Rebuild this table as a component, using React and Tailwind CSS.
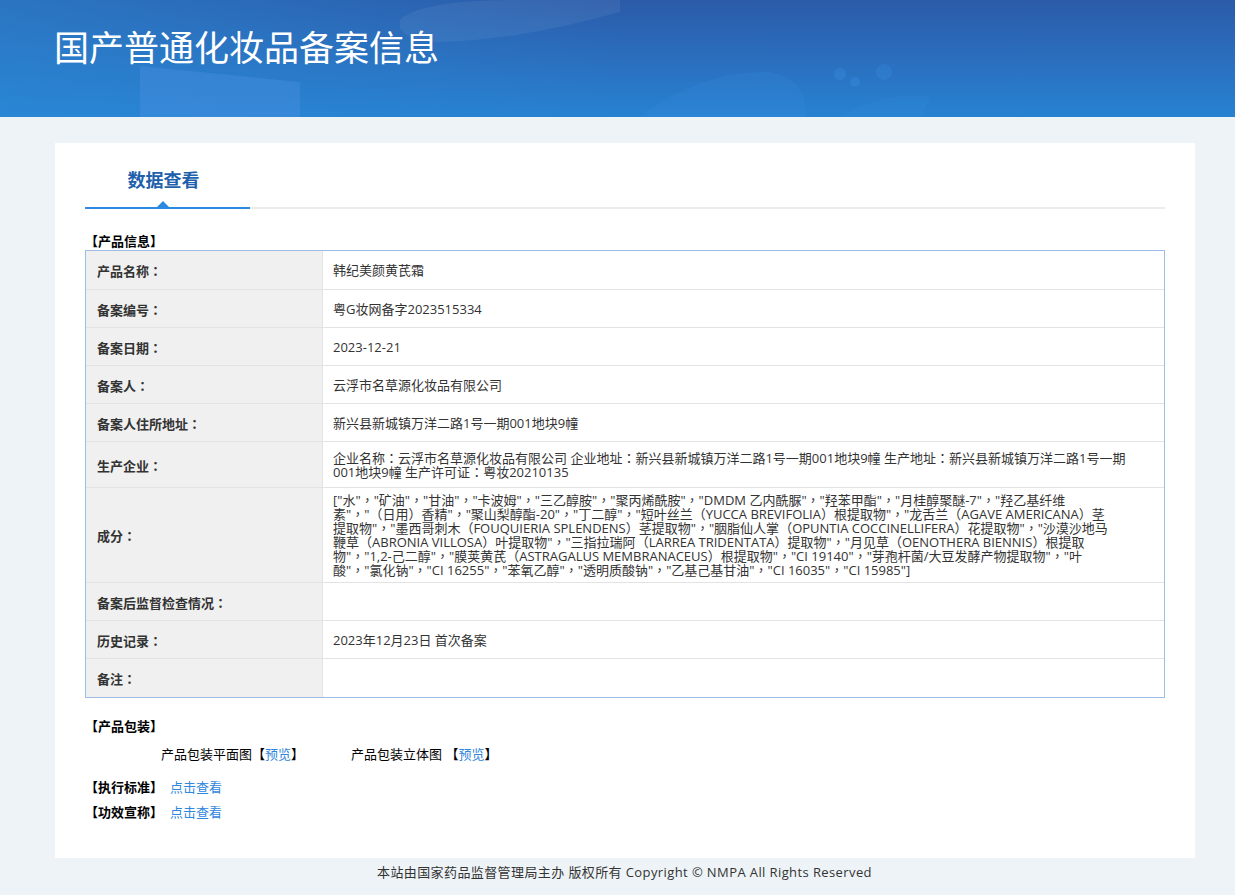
import React from "react";

const rows = [
  { label: "产品名称：", value: "韩纪美颜黄芪霜", h: "h-[39px]" },
  { label: "备案编号：", value: "粤G妆网备字2023515334", h: "h-[38px]" },
  { label: "备案日期：", value: "2023-12-21", h: "h-[38px]" },
  { label: "备案人：", value: "云浮市名草源化妆品有限公司", h: "h-[38px]" },
  { label: "备案人住所地址：", value: "新兴县新城镇万洋二路1号一期001地块9幢", h: "h-[38px]" },
  {
    label: "生产企业：",
    lines: [
      "企业名称：云浮市名草源化妆品有限公司 企业地址：新兴县新城镇万洋二路1号一期001地块9幢 生产地址：新兴县新城镇万洋二路1号一期",
      "001地块9幢 生产许可证：粤妆20210135",
    ],
    h: "h-[46px]",
  },
  {
    label: "成分：",
    lines: [
      '["水"，"矿油"，"甘油"，"卡波姆"，"三乙醇胺"，"聚丙烯酰胺"，"DMDM 乙内酰脲"，"羟苯甲酯"，"月桂醇聚醚-7"，"羟乙基纤维',
      '素"，"（日用）香精"，"聚山梨醇酯-20"，"丁二醇"，"短叶丝兰（YUCCA BREVIFOLIA）根提取物"，"龙舌兰（AGAVE AMERICANA）茎',
      '提取物"，"墨西哥刺木（FOUQUIERIA SPLENDENS）茎提取物"，"胭脂仙人掌（OPUNTIA COCCINELLIFERA）花提取物"，"沙漠沙地马',
      '鞭草（ABRONIA VILLOSA）叶提取物"，"三指拉瑞阿（LARREA TRIDENTATA）提取物"，"月见草（OENOTHERA BIENNIS）根提取',
      '物"，"1,2-己二醇"，"膜荚黄芪（ASTRAGALUS MEMBRANACEUS）根提取物"，"CI 19140"，"芽孢杆菌/大豆发酵产物提取物"，"叶',
      '酸"，"氯化钠"，"CI 16255"，"苯氧乙醇"，"透明质酸钠"，"乙基己基甘油"，"CI 16035"，"CI 15985"]',
    ],
    h: "h-[95px]",
  },
  { label: "备案后监督检查情况：", value: "", h: "h-[38px]" },
  { label: "历史记录：", value: "2023年12月23日 首次备案", h: "h-[38px]" },
  { label: "备注：", value: "", h: "h-[38px]" },
];

const font = {
  fontFamily: '"Open Sans", "Noto Sans CJK SC", sans-serif',
};

// Render full-width punctuation centred in its em box (as the reference's font does)
function P({ text }) {
  const parts = text.split(/([：，（）])/);
  return parts.map((p, i) =>
    /^[：，（）]$/.test(p) ? (
      <span key={i} className="font-['Noto_Sans_CJK_TC',sans-serif]">
        {p}
      </span>
    ) : (
      <React.Fragment key={i}>{p}</React.Fragment>
    )
  );
}

export default function App() {
  return (
    <div className="min-h-screen bg-[#eef3f7] text-[#333]" style={font}>
      <header className="relative h-[117px] overflow-hidden bg-gradient-to-b from-[#2b5ba9] to-[#2782d2]">
        <svg
          className="absolute inset-0 h-full w-full"
          viewBox="0 0 1235 117"
          preserveAspectRatio="none"
        >
          <defs>
            <linearGradient id="lg1" x1="0" y1="0" x2="1" y2="0">
              <stop offset="0" stopColor="#2a8ad6" stopOpacity="0.55" />
              <stop offset="0.5" stopColor="#2a8ad6" stopOpacity="0" />
            </linearGradient>
          </defs>
          <rect x="0" y="0" width="1235" height="117" fill="url(#lg1)" />
          <path d="M140 66 L300 82 L300 117 L140 117 Z" fill="#4a8fe0" opacity="0.4" />
          <path d="M400 20 Q420 0 520 0 L620 0 L620 12 Q520 40 440 42 Q395 40 400 20 Z" fill="#ffffff" opacity="0.06" />
          <path d="M640 117 Q700 70 770 72 Q810 80 805 117 Z" fill="#3a8ee0" opacity="0.2" />
          <path d="M840 117 Q880 92 930 96 Q925 110 920 117 Z" fill="#3a8ee0" opacity="0.18" />
          <circle cx="840" cy="74" r="6" fill="#3b8be0" opacity="0.35" />
          <circle cx="855" cy="82" r="5" fill="#3b8be0" opacity="0.35" />
          <circle cx="884" cy="72" r="8" fill="#3f8fe4" opacity="0.25" />
        </svg>
        <h1 className="relative pl-[54px] pt-[25px] text-[35px] leading-[46px] font-normal text-white">
          国产普通化妆品备案信息
        </h1>
      </header>

      <main className="pl-[55px] pr-[40px] pt-[26px]">
        <div className="bg-white px-[30px] pb-[37px]">
          <div className="flex h-[66px] border-b-2 border-[#ececec]">
            <div className="relative -mb-[2px] flex w-[165px] items-center justify-center border-b-2 border-[#2b8ae0] pt-[10px] pr-[8px]">
              <span className="text-[18px] font-bold leading-[24px] text-[#1e60ab]">数据查看</span>
              <span className="absolute bottom-0 left-[72px] h-0 w-0 border-b-[6px] border-l-[6px] border-r-[6px] border-b-[#2b8ae0] border-l-transparent border-r-transparent" />
            </div>
          </div>

          <div className="mt-[24px] text-[13px] font-bold leading-[17px] text-black">【产品信息】</div>

          <div className="border border-[#9dbde6]">
            {rows.map((r, i) => (
              <div
                key={i}
                className={`flex ${r.h} ${i < rows.length - 1 ? "border-b border-[#e3e3e3]" : ""}`}
              >
                <div className="flex w-[237px] shrink-0 items-center border-r border-[#e3e3e3] bg-[#f0f0f0] pl-[11px] pt-[2px] text-[13px] font-bold leading-[18px] text-[#333]">
                  <span>
                    <P text={r.label} />
                  </span>
                </div>
                <div className="flex flex-1 items-center pl-[10px] text-[13px] text-[#333]">
                  {r.lines ? (
                    <div className="leading-[13px]">
                      {r.lines.map((l, j) => (
                        <div key={j} className="whitespace-nowrap">
                          <P text={l} />
                        </div>
                      ))}
                    </div>
                  ) : (
                    <span className="leading-[18px]">
                      <P text={r.value} />
                    </span>
                  )}
                </div>
              </div>
            ))}
          </div>

          <div className="mt-[20px] text-[13px] font-bold leading-[17px] text-black">【产品包装】</div>
          <div className="mt-[10px] flex pl-[76px] text-[13px] leading-[18px] text-black">
            <div className="w-[190px]">
              产品包装平面图【<span className="text-[#2f86dd]">预览</span>】
            </div>
            <div>
              产品包装立体图 【<span className="text-[#2f86dd]">预览</span>】
            </div>
          </div>
          <div className="mt-[16px] flex text-[13px] leading-[17px]">
            <span className="font-bold text-black">【执行标准】</span>
            <span className="ml-[7px] text-[#2f86dd]">点击查看</span>
          </div>
          <div className="mt-[8px] flex text-[13px] leading-[17px]">
            <span className="font-bold text-black">【功效宣称】</span>
            <span className="ml-[7px] text-[#2f86dd]">点击查看</span>
          </div>
        </div>
      </main>

      <footer className="flex h-[30px] items-center justify-center pl-[14px] text-[13px] tracking-[0.4px] text-[#333]">
        本站由国家药品监督管理局主办 版权所有 Copyright © NMPA All Rights Reserved
      </footer>
    </div>
  );
}
